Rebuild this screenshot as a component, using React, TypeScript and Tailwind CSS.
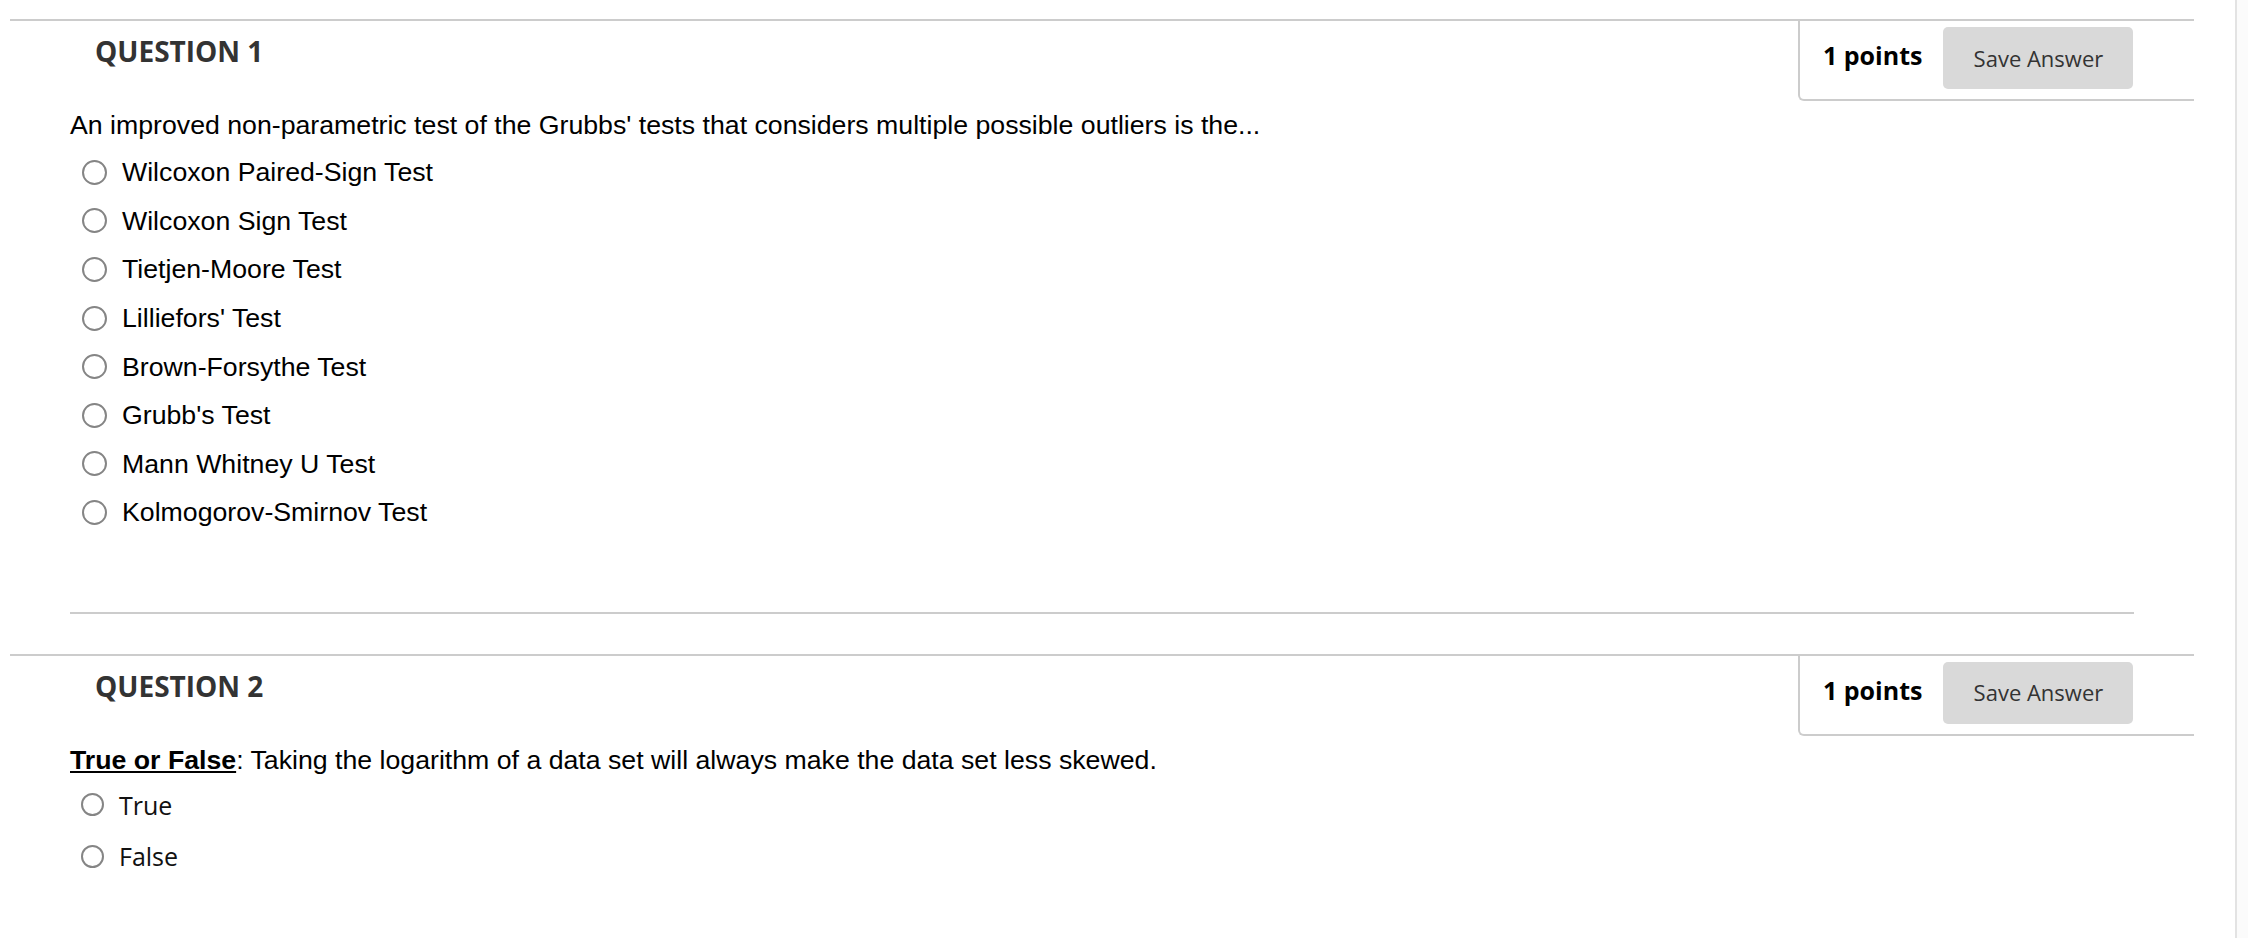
import React from "react";

const arial = { fontFamily: '"Liberation Sans", Arial, sans-serif' };

const q1Options = [
  "Wilcoxon Paired-Sign Test",
  "Wilcoxon Sign Test",
  "Tietjen-Moore Test",
  "Lilliefors' Test",
  "Brown-Forsythe Test",
  "Grubb's Test",
  "Mann Whitney U Test",
  "Kolmogorov-Smirnov Test",
];

/** Question header: title on the left, points + save button box on the right. */
function QuestionHeader({ n }: { n: number }) {
  return (
    <div className="flex items-start justify-between">
      <div className="pl-[85px] pt-[11px] text-[28px] leading-[38px] font-bold text-[#333333]">
        QUESTION {n}
      </div>
      <div className="w-[396px] h-[80px] border-l-2 border-b-2 border-[#cccccc] rounded-bl-[6px] flex items-start pl-[23px] pt-[6px] gap-[21px]">
        <span className="mt-[11px] text-[25px] leading-[34px] font-bold text-black">1 points</span>
        <button
          type="button"
          className="w-[190px] h-[62px] rounded-[5px] bg-[#d9d9d9] text-[22px] text-[#333333] flex items-center justify-center"
        >
          Save Answer
        </button>
      </div>
    </div>
  );
}

function Radio({ size }: { size: number }) {
  return (
    <span
      className="shrink-0 rounded-full border-2 border-[#858585] bg-white"
      style={{ width: size, height: size }}
    />
  );
}

export default function App() {
  return (
    <div
      className="w-[2248px] h-[938px] bg-white overflow-hidden flex"
      style={{ fontFamily: '"Open Sans", sans-serif' }}
    >
      <div className="w-[2235px] pt-[19px]">
        {/* Question 1 */}
        <section className="ml-[10px] w-[2184px] border-t-2 border-[#cccccc]">
          <QuestionHeader n={1} />
          <div className="pl-[60px] mt-[9px] text-[26.7px] leading-[30px] text-black" style={arial}>
            An improved non-parametric test of the Grubbs' tests that considers multiple possible outliers is the...
          </div>
          <ul className="mt-[8px] pl-[60px]">
            {q1Options.map((o) => (
              <li key={o} className="h-[48.6px] flex items-center gap-[15px] pl-[12px]">
                <Radio size={25} />
                <span className="text-[26.7px] leading-[30px] text-black" style={arial}>
                  {o}
                </span>
              </li>
            ))}
          </ul>
          <div className="mx-[60px] mt-[75px] border-t-2 border-[#cccccc]" />
        </section>

        {/* Question 2 */}
        <section className="mt-[40px] ml-[10px] w-[2184px] border-t-2 border-[#cccccc]">
          <QuestionHeader n={2} />
          <div className="pl-[60px] mt-[9px] text-[26.7px] leading-[30px] text-black" style={arial}>
            <span className="font-bold underline">True or False</span>: Taking the logarithm of a data set will always
            make the data set less skewed.
          </div>
          <ul className="mt-[4px] pl-[60px]">
            {["True", "False"].map((o) => (
              <li key={o} className="h-[51.5px] flex items-center gap-[15px] pl-[11px]">
                <Radio size={23} />
                <span className="text-[25px] leading-[32px] text-[#111111]">{o}</span>
              </li>
            ))}
          </ul>
        </section>
      </div>
      <div className="w-[13px] h-full border-l-2 border-[#e3e3e3] bg-[#fbfbfb]" />
    </div>
  );
}
